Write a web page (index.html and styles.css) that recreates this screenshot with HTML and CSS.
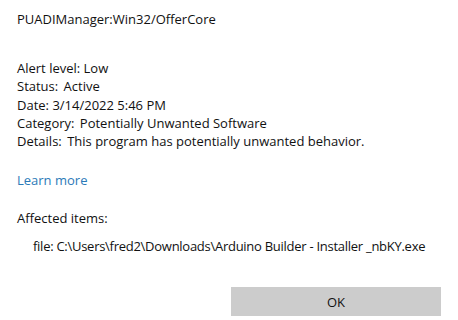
FILE: index.html
```html
<!DOCTYPE html>
<html>
<head>
<meta charset="utf-8">
<link rel="stylesheet" href="styles.css">
</head>
<body>
<div class="dialog">
  <div class="title">PUADIManager:Win32/OfferCore</div>
  <div class="details">
    <div class="row">Alert level: Low</div>
    <div class="row">Status: <span class="val">Active</span></div>
    <div class="row">Date: 3/14/2022 5:46 PM</div>
    <div class="row">Category: <span class="val">Potentially Unwanted Software</span></div>
    <div class="row">Details: <span class="val">This program has potentially unwanted behavior.</span></div>
  </div>
  <a class="learn" href="#">Learn more</a>
  <div class="affected">Affected items:</div>
  <div class="file">file: C:\Users\fred2\Downloads\Arduino Builder - Installer _nbKY.exe</div>
  <div class="actions">
    <button class="ok">OK</button>
  </div>
</div>
</body>
</html>
```
FILE: styles.css
```css
html, body {
  margin: 0;
  padding: 0;
  background: #ffffff;
}
.dialog {
  width: 458px;
  height: 320px;
  box-sizing: border-box;
  padding: 9px 17px 4px 17px;
  font-family: "Open Sans", "Noto Sans", sans-serif;
  font-size: 13px;
  color: #111111;
  display: flex;
  flex-direction: column;
}
.title {
  line-height: 18px;
  margin-top: 1px;
}
.details {
  margin-top: 31px;
  display: flex;
  flex-direction: column;
}
.row {
  line-height: 18.25px;
}
.val {
  padding-left: 2px;
}
.learn {
  margin-top: 21px;
  color: #2b7ab8;
  text-decoration: none;
  line-height: 18px;
  align-self: flex-start;
}
.affected {
  margin-top: 20px;
  line-height: 18px;
}
.file {
  margin-top: 10px;
  padding-left: 16px;
  line-height: 18px;
  white-space: nowrap;
  letter-spacing: -0.27px;
}
.actions {
  margin-top: auto;
  display: flex;
  justify-content: flex-end;
}
.ok {
  width: 210px;
  height: 29px;
  background: #cccccc;
  border: none;
  font-family: inherit;
  font-size: 13px;
  color: #111111;
  padding: 0;
}
```
